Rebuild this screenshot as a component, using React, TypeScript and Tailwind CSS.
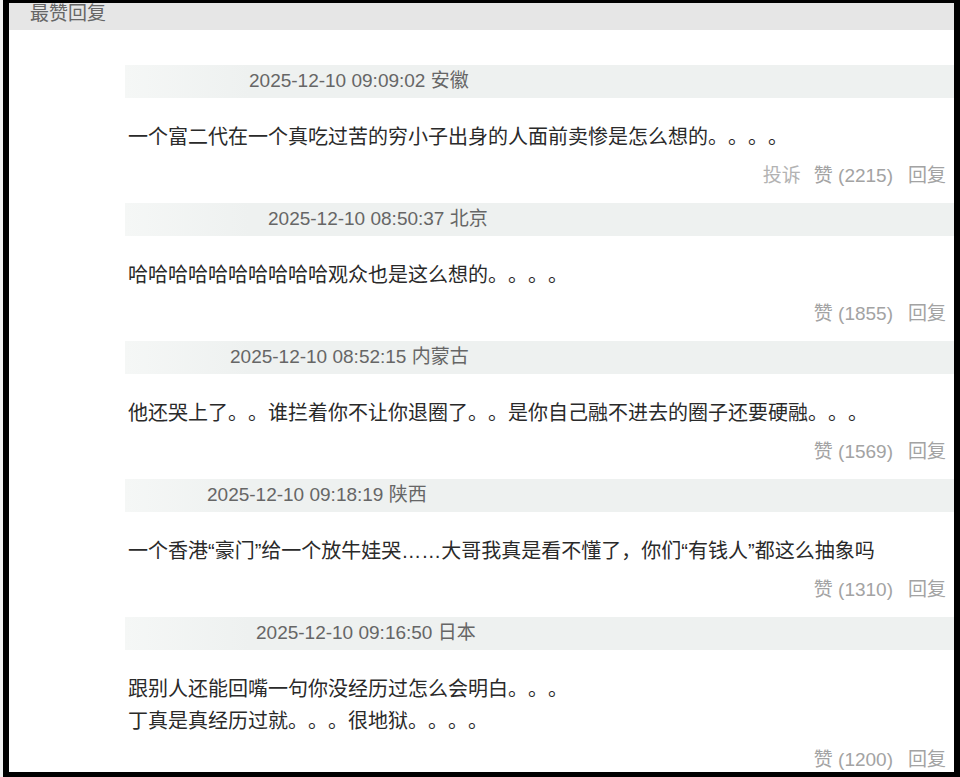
import React from 'react'

// 最赞回复 list
const comments = [
  {
    id: 1,
    time: '2025-12-10 09:09:02',
    region: '安徽',
    indent: 'pl-[124px]',
    lines: ['一个富二代在一个真吃过苦的穷小子出身的人面前卖惨是怎么想的。。。。'],
    likes: 2215,
    report: true,
  },
  {
    id: 2,
    time: '2025-12-10 08:50:37',
    region: '北京',
    indent: 'pl-[143px]',
    lines: ['哈哈哈哈哈哈哈哈哈哈观众也是这么想的。。。。'],
    likes: 1855,
  },
  {
    id: 3,
    time: '2025-12-10 08:52:15',
    region: '内蒙古',
    indent: 'pl-[105px]',
    lines: ['他还哭上了。。谁拦着你不让你退圈了。。是你自己融不进去的圈子还要硬融。。。'],
    likes: 1569,
  },
  {
    id: 4,
    time: '2025-12-10 09:18:19',
    region: '陕西',
    indent: 'pl-[82px]',
    lines: ['一个香港“豪门”给一个放牛娃哭……大哥我真是看不懂了，你们“有钱人”都这么抽象吗'],
    likes: 1310,
  },
  {
    id: 5,
    time: '2025-12-10 09:16:50',
    region: '日本',
    indent: 'pl-[131px]',
    lines: ['跟别人还能回嘴一句你没经历过怎么会明白。。。', '丁真是真经历过就。。。很地狱。。。。'],
    likes: 1200,
  },
]

const font = "font-['Liberation_Sans','Noto_Sans_CJK_SC',sans-serif] [text-spacing-trim:space-all]"

export default function App() {
  return (
    <div className={`h-[777px] w-[960px] bg-[#f2f2f2] pl-[3px] ${font}`}>
      <div className="h-full border-l-[6px] border-t-[3px] border-r-[6px] border-b-[5px] border-black bg-white overflow-hidden">
        {/* Header */}
        <div className="h-[27px] bg-[#e6e6e6] pl-[21px]">
          <span className="text-[19px] leading-[21px] text-[#666]">最赞回复</span>
        </div>

        {/* Comments */}
        <div className="pt-[35px] pl-[116px]">
          {comments.map((c) => (
            <div key={c.id} className="mb-[15px]">
              <div
                className={`h-[33px] flex items-center bg-linear-to-r from-[#f5f7f6] to-[#eef1f0] to-[15%] text-[19px] text-[#666] ${c.indent}`}
              >
                {c.time} {c.region}
              </div>
              <div className="mt-[23px] pl-[3px] text-[20px] leading-[32px] text-[#2a2a2a]">
                {c.lines.map((line) => (
                  <p key={line}>{line}</p>
                ))}
              </div>
              <div className="mt-[11px] flex justify-end items-center pr-[8px] text-[19px] leading-[24px] text-[#a3a3a3]">
                {c.report && <span className="mr-[13px] text-[#b3b3b3]">投诉</span>}
                <span>赞 ({c.likes})</span>
                <span className="ml-[15px]">回复</span>
              </div>
            </div>
          ))}
        </div>
      </div>
    </div>
  )
}
